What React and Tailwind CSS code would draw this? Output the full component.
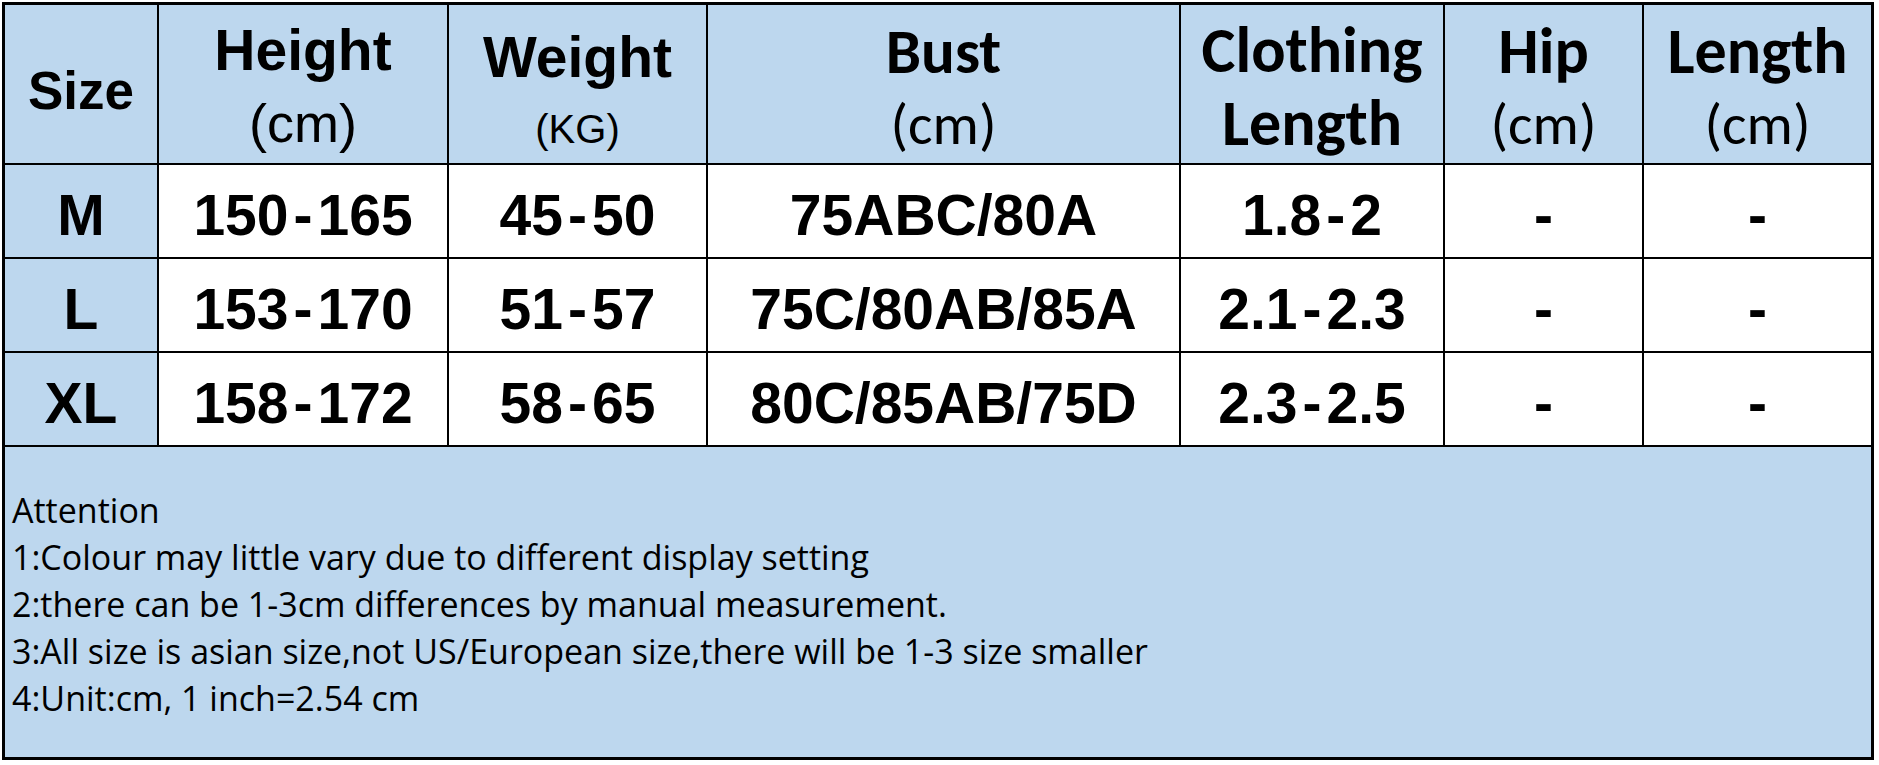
const arial = "font-['Liberation_Sans',Arial,sans-serif]"
const calibri = "font-['Carlito','Lato',sans-serif]"

const rows = [
  { size: "M", height: "150-165", weight: "45-50", bust: "75ABC/80A", clothing: "1.8-2" },
  { size: "L", height: "153-170", weight: "51-57", bust: "75C/80AB/85A", clothing: "2.1-2.3" },
  { size: "XL", height: "158-172", weight: "58-65", bust: "80C/85AB/75D", clothing: "2.3-2.5" },
]

const notes = [
  "Attention",
  "1:Colour may little vary due to different display setting",
  "2:there can be 1-3cm differences by manual measurement.",
  "3:All size is asian size,not US/European size,there will be 1-3 size smaller",
  "4:Unit:cm, 1 inch=2.54 cm",
]

// spreadsheet hyphens sit with a bit of air on both sides
function Range({ value }) {
  const parts = value.split("-")
  return (
    <span className="whitespace-nowrap">
      {parts.map((p, i) => (
        <span key={i}>
          {i > 0 && <span className="mx-[5px]">-</span>}
          {p}
        </span>
      ))}
    </span>
  )
}

function DataCell({ children, blue }) {
  return (
    <div
      className={`${blue ? "bg-[#bdd7ee]" : "bg-white"} ${arial} flex items-center justify-center pt-[8px] text-[57px] font-bold leading-none text-black`}
    >
      {children}
    </div>
  )
}

function HeadCell({ children, className = "" }) {
  return (
    <div className={`flex flex-col items-center bg-[#bdd7ee] text-black ${className}`}>
      {children}
    </div>
  )
}

export default function App() {
  return (
    <div className="min-h-screen bg-white pl-[2px] pt-[2px]">
      <div className="grid h-[758px] w-[1872px] grid-cols-[152px_288px_257px_471px_262px_197px_227px] grid-rows-[158px_92px_92px_92px_310px] gap-[2px] border-[3px] border-black bg-black">
        {/* header */}
        <div className={`flex items-center justify-center bg-[#bdd7ee] pt-[12px] ${arial} text-[53px] font-bold leading-none`}>
          Size
        </div>
        <HeadCell className={`pt-[9px] ${arial}`}>
          <div className="text-[57px] font-bold leading-[73px]">Height</div>
          <div className="text-[54px] leading-[73px]">(cm)</div>
        </HeadCell>
        <HeadCell className={`pt-[16px] ${arial}`}>
          <div className="text-[57px] font-bold leading-[73px]">Weight</div>
          <div className="text-[40px] leading-[70px]">(KG)</div>
        </HeadCell>
        <HeadCell className={`pt-[10px] ${calibri}`}>
          <div className="text-[63px] font-bold leading-[73px]">Bust</div>
          <div className="text-[58px] leading-[73px]">(cm)</div>
        </HeadCell>
        <HeadCell className={`pt-[9px] ${calibri}`}>
          <div className="text-[64px] font-bold leading-[73px]">Clothing</div>
          <div className="text-[64px] font-bold leading-[73px]">Length</div>
        </HeadCell>
        <HeadCell className={`pt-[10px] ${calibri}`}>
          <div className="text-[64px] font-bold leading-[73px]">Hip</div>
          <div className="text-[58px] leading-[73px]">(cm)</div>
        </HeadCell>
        <HeadCell className={`pt-[10px] ${calibri}`}>
          <div className="text-[64px] font-bold leading-[73px]">Length</div>
          <div className="text-[58px] leading-[73px]">(cm)</div>
        </HeadCell>

        {/* size rows */}
        {rows.map((r) => (
          <div key={r.size} className="contents">
            <DataCell blue>{r.size}</DataCell>
            <DataCell><Range value={r.height} /></DataCell>
            <DataCell><Range value={r.weight} /></DataCell>
            <DataCell>{r.bust}</DataCell>
            <DataCell><Range value={r.clothing} /></DataCell>
            <DataCell>-</DataCell>
            <DataCell>-</DataCell>
          </div>
        ))}

        {/* notes */}
        <div className="col-span-7 bg-[#bdd7ee] pl-[7px] pt-[40px] font-['Open_Sans',sans-serif] text-[34px] leading-[47px] text-black">
          {notes.map((n) => (
            <div key={n}>{n}</div>
          ))}
        </div>
      </div>
    </div>
  )
}
